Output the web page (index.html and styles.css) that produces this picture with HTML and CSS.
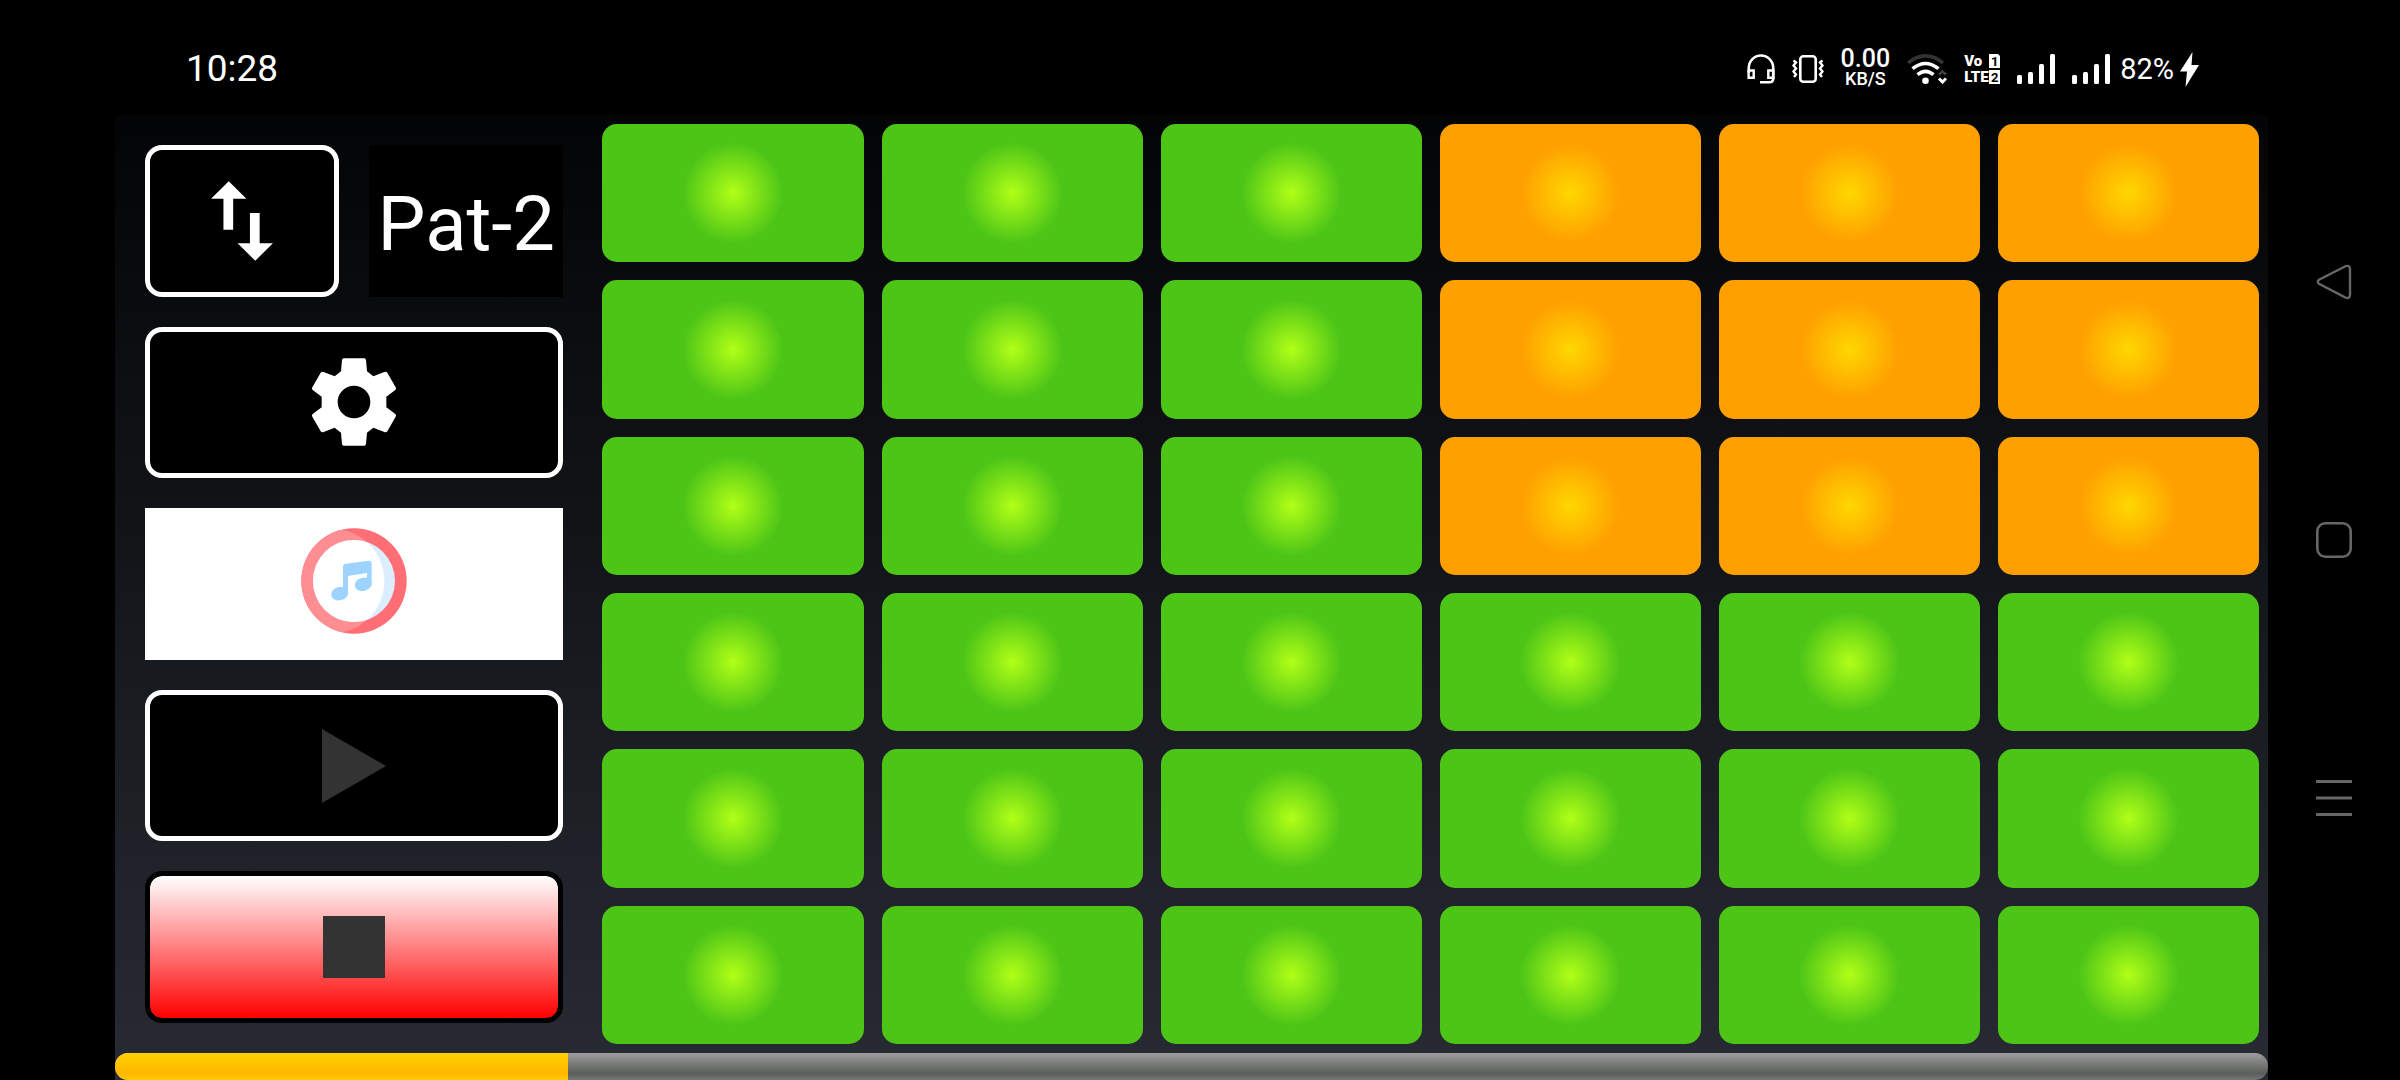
FILE: index.html
```html
<!DOCTYPE html>
<html lang="en">
<head>
<meta charset="utf-8">
<meta name="viewport" content="width=device-width, initial-scale=1">
<title>Drum Pads</title>
<link rel="stylesheet" href="styles.css">
</head>
<body>
<div class="screen">
  <header class="status">
    <time class="clock">10:28</time>
    <div class="indicators">
      <svg class="i-headset" viewBox="0 0 28 30" aria-hidden="true"><path d="M1.800 19V14a12.200 12.500 0 0 1 24.400 0V25a3.200 3.200 0 0 1-3.200 3.200H13" fill="none" stroke="#fff" stroke-width="2.600"/><path d="M1.600 16.500H6.700V23.700H1.600ZM21.300 16.500H26.400V23.700H21.300Z" fill="none" stroke="#fff" stroke-width="2.400"/></svg>
      <svg class="i-vibrate" viewBox="0 0 32 28" aria-hidden="true"><rect x="8.300" y="1.300" width="15.400" height="25.400" rx="3" fill="none" stroke="#fff" stroke-width="2.600"/><path d="M1.500 5.500l2.500 2-2.500 3 2.500 3-2.500 3 2.500 3-2 2.500M30.500 5.500l-2.500 2 2.500 3-2.500 3 2.500 3-2.500 3 2 2.500" fill="none" stroke="#fff" stroke-width="2.400"/></svg>
      <div class="speed"><span class="rate">0.00</span><span class="unit">KB/S</span></div>
      <svg class="i-wifi" viewBox="0 0 40 30" aria-hidden="true"><g fill="none" stroke="#fff" stroke-width="3.600"><path d="M1.200 8.800Q18.500-5 36 8.800" stroke="#333"/><path d="M5.500 14.700Q18.500 4.300 31.500 14.700"/><path d="M10.500 20.700Q18.500 14 26.500 20.700"/><path d="M32 20.500l3.500-3 3.500 3" stroke="#444" stroke-width="2.400"/><path d="M32 24.500l3.500 3.500 3.500-3.500" stroke-width="3"/></g><circle cx="18.500" cy="26.700" r="3.300" fill="#fff"/></svg>
      <div class="volte">
        <span>Vo</span><svg class="i-sim" viewBox="0 0 11 14" role="img" aria-label="1"><path d="M0 0h9l2 2v12H0Z" fill="#fff"/><text class="sim" x="2" y="12">1</text></svg>
        <span>LTE</span><svg class="i-sim" viewBox="0 0 11 14" role="img" aria-label="2"><path d="M0 0h11v14H0Z" fill="#fff"/><text class="sim" x="2" y="12">2</text></svg>
      </div>
      <svg class="i-signal" viewBox="0 0 38 30" aria-hidden="true"><g fill="#fff"><rect y="21" width="5" height="9" rx="1.500"/><rect x="11" y="18" width="5" height="12" rx="1.500"/><rect x="22" y="10" width="5" height="20" rx="1.500"/><rect x="33" width="5" height="30" rx="1.500"/></g></svg>
      <svg class="i-signal" viewBox="0 0 38 30" aria-hidden="true"><g fill="#fff"><rect y="21" width="5" height="9" rx="1.500"/><rect x="11" y="18" width="5" height="12" rx="1.500"/><rect x="22" y="10" width="5" height="20" rx="1.500"/><rect x="33" width="5" height="30" rx="1.500"/></g></svg>
    </div>
    <div class="battery">
      <span>82%</span>
      <svg class="i-bolt" viewBox="0 0 19 35" aria-hidden="true"><path d="M12.500 0 0 19.500H7L5.500 35 19 13H11.500Z" fill="#fff"/></svg>
    </div>
  </header>

  <main class="app">
    <div class="stage">
      <section class="controls">
        <div class="pattern">
          <button class="control" type="button" aria-label="Switch pattern"><svg class="i-swap" viewBox="0 0 24 24"><path d="M16 17.010V10.200h-2.200v6.810H11L15 21l4-3.990ZM9 3 5 6.990h2.800V14H10V6.990h3Z" fill="#fff"/></svg></button>
          <output class="pattern-name">Pat-2</output>
        </div>
        <button class="control" type="button" aria-label="Settings"><svg class="i-gear" viewBox="-150 -150 300 300"><path fill-rule="evenodd" d="M-31-131H31Q35-131 36-126L39-92 58-77 91-90Q97-92 100-88L125-44Q128-39 124-36L97-16V16L124 36Q128 39 125 44L100 88Q97 92 91 90L58 77 39 92 36 126Q35 131 31 131H-31Q-35 131-36 126L-39 92-58 77-91 90Q-97 92-100 88L-125 44Q-128 39-124 36L-97 16V-16L-124-36Q-128-39-125-44L-100-88Q-97-92-91-90L-58-77-39-92-36-126Q-35-131-31-131ZM0-49A49 49 0 1 0 0 49 49 49 0 1 0 0-49Z" fill="#fff"/></svg></button>
        <button class="control control-music" type="button" aria-label="Songs"><svg class="i-music" viewBox="0 0 318 336">
          <defs><clipPath id="lit"><circle cx="93" cy="159" r="157"/></clipPath></defs>
          <circle cx="159" cy="159" r="158" fill="#ff6e74"/>
          <circle cx="159" cy="159" r="158" fill="#ff8e93" clip-path="url(#lit)"/>
          <circle cx="159" cy="159" r="123" fill="#dbeeff"/>
          <circle cx="159" cy="159" r="123" fill="#fff" clip-path="url(#lit)"/>
          <g fill="#9fd3ff"><path d="M126 198V117Q126 108 135 107L203 98Q212 97 212 106V168H198V135L141 144V198Z"/><ellipse cx="116" cy="197" rx="26" ry="20" transform="rotate(-15 116 197)"/><ellipse cx="187" cy="169" rx="26" ry="20" transform="rotate(-15 187 169)"/></g>
        </svg></button>
        <button class="control" type="button" aria-label="Play"><svg class="i-play" viewBox="0 0 64 76"><path d="M0 1 64 38 0 75Z" fill="#333"/></svg></button>
        <button class="control control-stop" type="button" aria-label="Stop"><svg class="i-stop" viewBox="0 0 62 62"><path d="M0 0H62V62H0Z" fill="#333"/></svg></button>
      </section>

      <section class="pads" aria-label="Pads">
        <button class="pad" type="button" aria-label="Pad 1"></button>
        <button class="pad" type="button" aria-label="Pad 2"></button>
        <button class="pad" type="button" aria-label="Pad 3"></button>
        <button class="pad pad-orange" type="button" aria-label="Pad 4"></button>
        <button class="pad pad-orange" type="button" aria-label="Pad 5"></button>
        <button class="pad pad-orange" type="button" aria-label="Pad 6"></button>
        <button class="pad" type="button" aria-label="Pad 7"></button>
        <button class="pad" type="button" aria-label="Pad 8"></button>
        <button class="pad" type="button" aria-label="Pad 9"></button>
        <button class="pad pad-orange" type="button" aria-label="Pad 10"></button>
        <button class="pad pad-orange" type="button" aria-label="Pad 11"></button>
        <button class="pad pad-orange" type="button" aria-label="Pad 12"></button>
        <button class="pad" type="button" aria-label="Pad 13"></button>
        <button class="pad" type="button" aria-label="Pad 14"></button>
        <button class="pad" type="button" aria-label="Pad 15"></button>
        <button class="pad pad-orange" type="button" aria-label="Pad 16"></button>
        <button class="pad pad-orange" type="button" aria-label="Pad 17"></button>
        <button class="pad pad-orange" type="button" aria-label="Pad 18"></button>
        <button class="pad" type="button" aria-label="Pad 19"></button>
        <button class="pad" type="button" aria-label="Pad 20"></button>
        <button class="pad" type="button" aria-label="Pad 21"></button>
        <button class="pad" type="button" aria-label="Pad 22"></button>
        <button class="pad" type="button" aria-label="Pad 23"></button>
        <button class="pad" type="button" aria-label="Pad 24"></button>
        <button class="pad" type="button" aria-label="Pad 25"></button>
        <button class="pad" type="button" aria-label="Pad 26"></button>
        <button class="pad" type="button" aria-label="Pad 27"></button>
        <button class="pad" type="button" aria-label="Pad 28"></button>
        <button class="pad" type="button" aria-label="Pad 29"></button>
        <button class="pad" type="button" aria-label="Pad 30"></button>
        <button class="pad" type="button" aria-label="Pad 31"></button>
        <button class="pad" type="button" aria-label="Pad 32"></button>
        <button class="pad" type="button" aria-label="Pad 33"></button>
        <button class="pad" type="button" aria-label="Pad 34"></button>
        <button class="pad" type="button" aria-label="Pad 35"></button>
        <button class="pad" type="button" aria-label="Pad 36"></button>
      </section>
    </div>
    <progress class="progress" value="453" max="2153" aria-label="Song position"></progress>
  </main>

  <nav class="system" aria-label="System">
    <button class="system-key" type="button" aria-label="Back"><svg viewBox="0 0 36 36"><path d="M29.500 2.200 3 15.800Q.5 17.800 3 19.800L29.500 33.600Q34 35 34 31V5Q34 1 29.500 2.200Z" fill="none" stroke="#666" stroke-width="2.400"/></svg></button>
    <button class="system-key" type="button" aria-label="Home"><svg viewBox="0 0 36 36"><rect x="1.300" y="1.300" width="33.400" height="33.400" rx="8" fill="none" stroke="#666" stroke-width="2.600"/></svg></button>
    <button class="system-key" type="button" aria-label="Recent apps"><svg viewBox="0 0 36 36"><path d="M0 1.500H36M0 18H36M0 34.500H36" fill="none" stroke="#666" stroke-width="3"/></svg></button>
  </nav>
</div>
</body>
</html>
```
FILE: styles.css
```css
* {
  box-sizing: border-box;
}

body {
  margin: 0;
  background: #000;
  color: #fff;
  font-family: Roboto, "Liberation Sans", sans-serif;
}

button {
  appearance: none;
  margin: 0;
  padding: 0;
  border: 0;
  background: none;
  color: inherit;
  font: inherit;
  cursor: pointer;
}

svg {
  display: block;
  flex: none;
}

.screen {
  display: grid;
  grid-template-columns: 115px minmax(0, 1fr) 132px;
  grid-template-rows: 115px minmax(0, 1fr);
  min-height: 100vh;
}

/* Status bar */
.status {
  grid-column: 1 / 3;
  grid-row: 1;
  display: flex;
  align-items: center;
  gap: 10px;
  padding: 23px 69px 0 186px;
}

.clock {
  flex: 1;
  font-size: 37px;
  line-height: 40px;
}

.indicators {
  display: flex;
  align-items: center;
  gap: 17px;
}

.speed {
  display: flex;
  flex-direction: column;
  align-items: center;
  font-weight: 500;
}

.rate {
  font-size: 25px;
  line-height: 20px;
}

.unit {
  font-size: 18px;
  line-height: 20px;
}

.battery {
  display: flex;
  align-items: center;
  gap: 6px;
  font-size: 29px;
  line-height: 32px;
}

.volte {
  display: grid;
  grid-template-columns: 23px 11px;
  grid-template-rows: 14px 14px;
  gap: 2px;
  font-size: 15px;
  font-weight: 900;
  line-height: 14px;
}

.i-headset { width: 28px; height: 30px; }
.i-vibrate { width: 32px; height: 28px; }
.i-wifi { width: 40px; height: 30px; }
.i-sim { width: 11px; height: 14px; overflow: visible; }
.i-signal { width: 38px; height: 30px; }
.i-bolt { width: 19px; height: 35px; }

.sim {
  fill: #000;
  font-size: 13px;
  font-weight: 700;
}

/* App area */
.app {
  grid-column: 2;
  grid-row: 2;
  display: flex;
  flex-direction: column;
  background: linear-gradient(#030405, #16191d 55%, #282b33);
}

.stage {
  flex: 1;
  display: grid;
  grid-template-columns: minmax(0, 2fr) minmax(0, 7fr);
}

.controls {
  display: grid;
  grid-template-rows: repeat(5, minmax(0, 1fr));
  gap: 30px;
  padding: 30px;
}

.pattern {
  display: grid;
  grid-template-columns: repeat(2, minmax(0, 1fr));
  gap: 30px;
}

.control {
  display: flex;
  align-items: center;
  justify-content: center;
  border: 5px solid #fff;
  border-radius: 17px;
  background: #000;
}

.control-music {
  border: 0;
  border-radius: 0;
  background: #fff;
}

.control-stop {
  border-color: #000;
  background: linear-gradient(#fff, #f00) padding-box, #000;
}

.pattern-name {
  display: flex;
  align-items: center;
  justify-content: center;
  padding-top: 6px;
  background: #000;
  font-size: 76px;
  line-height: 88px;
  white-space: nowrap;
}

.i-swap { width: 106px; height: 106px; }
.i-gear { width: 100px; height: 100px; }
.i-music { width: 106px; height: 112px; }
.i-play { width: 64px; height: 76px; }
.i-stop { width: 62px; height: 62px; }

.pads {
  display: grid;
  grid-template-columns: repeat(6, minmax(0, 1fr));
  grid-template-rows: repeat(6, minmax(0, 1fr));
  gap: 18px;
  padding: 9px;
}

.pad {
  border-radius: 15px;
  background: radial-gradient(circle, #b1ff17, #4dc517 50px);
}

.pad-orange {
  background: radial-gradient(circle, #ffd700, #ff9f00 50px);
}

.progress {
  appearance: none;
  display: block;
  width: 100%;
  height: 27px;
  border: 0;
  border-radius: 13px;
  overflow: hidden;
}

.progress::-webkit-progress-bar {
  background: linear-gradient(#9d9e9d, #5a5d5a 75%, #747674);
}

.progress::-webkit-progress-value {
  background: linear-gradient(#ffd300, #ffb600 75%, #ffcb00);
}

/* System keys */
.system {
  grid-column: 3;
  grid-row: 1 / 3;
  display: flex;
  flex-direction: column;
  align-items: center;
  justify-content: space-between;
  padding: 264px 0;
}

.system-key {
  width: 36px;
  height: 36px;
}
```
